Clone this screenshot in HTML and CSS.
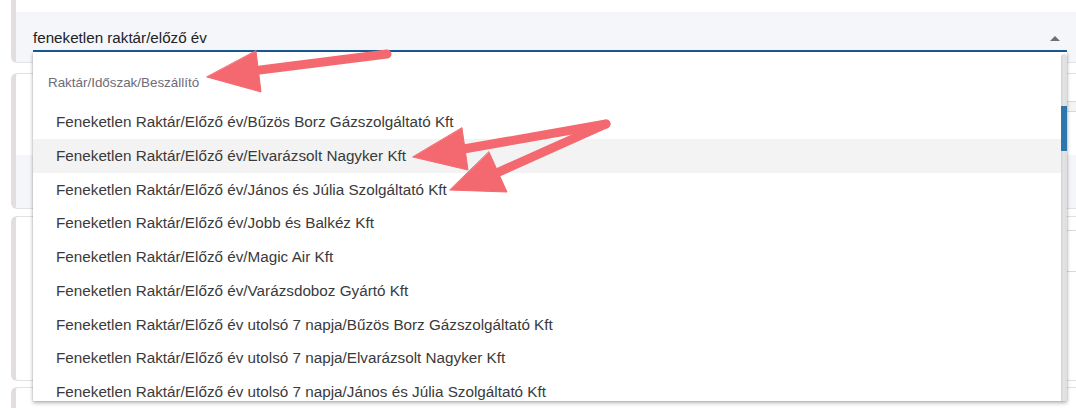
FILE: index.html
```html
<!DOCTYPE html>
<html lang="hu">
<head>
<meta charset="utf-8">
<title>Raktár választó</title>
<link rel="stylesheet" href="styles.css">
</head>
<body>
<div class="page">
  <section class="card card-first">
    <div class="panel panel-field">
      <div class="field">
        <div class="field-row">
          <span class="field-value">feneketlen raktár/előző év</span>
          <span class="caret"></span>
        </div>
        <div class="dropdown">
          <div class="list">
            <div class="group-label">Raktár/Időszak/Beszállító</div>
            <div class="option">Feneketlen Raktár/Előző év/Bűzös Borz Gázszolgáltató Kft</div>
            <div class="option is-hover">Feneketlen Raktár/Előző év/Elvarázsolt Nagyker Kft</div>
            <div class="option">Feneketlen Raktár/Előző év/János és Júlia Szolgáltató Kft</div>
            <div class="option">Feneketlen Raktár/Előző év/Jobb és Balkéz Kft</div>
            <div class="option">Feneketlen Raktár/Előző év/Magic Air Kft</div>
            <div class="option">Feneketlen Raktár/Előző év/Varázsdoboz Gyártó Kft</div>
            <div class="option">Feneketlen Raktár/Előző év utolsó 7 napja/Bűzös Borz Gázszolgáltató Kft</div>
            <div class="option">Feneketlen Raktár/Előző év utolsó 7 napja/Elvarázsolt Nagyker Kft</div>
            <div class="option">Feneketlen Raktár/Előző év utolsó 7 napja/János és Júlia Szolgáltató Kft</div>
          </div>
          <div class="scrollbar"><div class="thumb"></div></div>
        </div>
      </div>
    </div>
  </section>

  <section class="card card-second">
    <div class="card-top">
      <div class="ghost ghost-small"></div>
    </div>
    <div class="panel panel-low"></div>
  </section>

  <section class="card card-third">
    <div class="ghost ghost-tall"></div>
  </section>

  <section class="card card-fourth">
    <div class="check"></div>
  </section>
</div>

<svg class="annotations" width="1076" height="408" viewBox="0 0 1076 408" aria-hidden="true">
  <g fill="#f4696f" stroke="#f4696f" stroke-linecap="round" stroke-linejoin="round">
    <line x1="387" y1="54" x2="252" y2="71" stroke-width="9"/>
    <polygon points="256,51 261,92 207,77" stroke-width="1"/>
    <line x1="606" y1="124" x2="458" y2="150" stroke-width="9"/>
    <polygon points="462,128 468,170 413,157" stroke-width="1"/>
    <line x1="606" y1="124" x2="492" y2="175" stroke-width="9"/>
    <polygon points="489,152 507,192 450,190" stroke-width="1"/>
  </g>
</svg>
</body>
</html>
```

FILE: styles.css
```css
html, body {
  margin: 0;
  padding: 0;
  background: #ffffff;
  overflow: hidden;
  width: 1076px;
  height: 408px;
  font-family: "Liberation Sans", Arial, sans-serif;
}

.page {
  width: 1090px;
  height: 408px;
  overflow: hidden;
  padding-left: 11px;
  display: flex;
  flex-direction: column;
}

.card {
  background: #ffffff;
  border: 1px solid #e1e1e1;
  border-left: 5px solid #e2dede;
  border-radius: 6px;
  display: flex;
  flex-direction: column;
  flex-shrink: 0;
}

.card-first {
  margin-top: -10px;
  padding-top: 22px;
  border-top: none;
  border-bottom-color: #e4e4e4;
  position: relative;
  z-index: 2;
}

.panel {
  background: #f5f6fa;
}

.panel-field {
  height: 50px;
  padding-left: 17px;
}

.field {
  position: relative;
  width: 1034px;
}

.field-row {
  display: flex;
  align-items: center;
  padding: 16px 7px 2px 0;
  line-height: 20px;
  border-bottom: 2px solid #1b5e99;
}

.field-value {
  flex: 1;
  font-size: 15.2px;
  color: #222222;
}

.caret {
  width: 0;
  height: 0;
  border-left: 5px solid transparent;
  border-right: 5px solid transparent;
  border-bottom: 5px solid #6f6f6f;
}

.dropdown {
  position: absolute;
  top: 100%;
  left: 0;
  right: 0;
  height: 349px;
  background: #ffffff;
  box-shadow: 0 2px 4px rgba(0, 0, 0, 0.28), 0 0 2px rgba(0, 0, 0, 0.18);
  display: flex;
  overflow: hidden;
  z-index: 5;
}

.list {
  flex: 1;
  overflow: hidden;
}

.group-label {
  padding: 21px 0 12px 15px;
  line-height: 20px;
  font-size: 13.4px;
  color: #6d6c78;
}

.option {
  height: 33.75px;
  line-height: 33.75px;
  padding-left: 23px;
  font-size: 15.25px;
  color: #3a3a3a;
  white-space: nowrap;
}

.option.is-hover {
  background: #f3f3f3;
}

.scrollbar {
  width: 6px;
  margin-top: 2px;
  border-radius: 3px 3px 0 0;
  background: linear-gradient(to right, #d2d2d2, #e3e3e3 40%, #dedede);
  position: relative;
}

.thumb {
  position: absolute;
  left: 0;
  right: 0;
  top: 52px;
  height: 45px;
  background: #2e77ae;
}

.card-second {
  margin-top: 10px;
  height: 134px;
}

.card-top {
  flex: 1;
  display: flex;
  justify-content: flex-end;
  align-items: flex-start;
  padding-top: 27px;
}

.ghost {
  border: 1px solid #d9d9d9;
  border-radius: 4px;
  background: #f4f4f4;
}

.ghost-small {
  width: 60px;
  height: 9px;
  margin-right: 20px;
}

.panel-low {
  height: 53px;
}

.card-third {
  margin-top: 7px;
  height: 150px;
  align-items: flex-end;
  padding-top: 13px;
}

.ghost-tall {
  width: 80px;
  height: 40px;
  margin-right: 19px;
  background: #ffffff;
}

.card-fourth {
  margin-top: 6px;
  height: 40px;
  padding: 26px 0 0 20px;
}

.check {
  width: 13px;
  height: 13px;
  border: 1px solid #d4d4d4;
  border-radius: 2px;
  background: #f1f1f1;
}

.annotations {
  position: absolute;
  left: 0;
  top: 0;
  pointer-events: none;
  z-index: 10;
}
```
